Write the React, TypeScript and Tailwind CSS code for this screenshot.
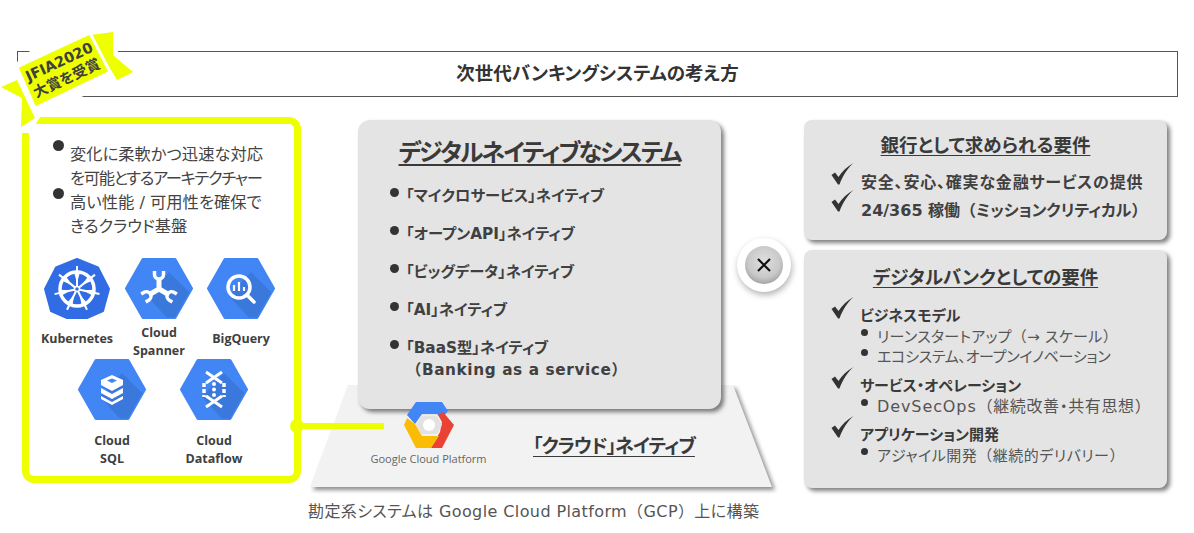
import React from 'react';

const jp = "font-['DejaVu_Sans','Noto_Sans_CJK_JP',sans-serif] [font-feature-settings:'palt']";

// full width brackets, the rest of the text stays proportional
function Fw({ text }: { text: string }) {
  return (
    <>
      {text.split(/([（）])/).map((part, i) =>
        part === '（' || part === '）' ? (
          <span key={i} className="[font-feature-settings:normal]">
            {part}
          </span>
        ) : (
          part
        ),
      )}
    </>
  );
}

function Hex({ id, children }: { id: string; children: React.ReactNode }) {
  return (
    <svg width="68" height="61" viewBox="0 0 68 61">
      <clipPath id={id}>
        <path d="M18 1.5H50L66.5 30.5L50 59.5H18L1.5 30.5Z" />
      </clipPath>
      <path d="M18 1.5H50L66.5 30.5L50 59.5H18L1.5 30.5Z" fill="#4285f4" stroke="#4285f4" strokeWidth="3" strokeLinejoin="round" />
      <path d="M22 38L44 14L70 40V64H46Z" fill="#3b78dc" clipPath={`url(#${id})`} />
      {children}
    </svg>
  );
}

function Kubernetes() {
  const spokes = [0, 51.4, 102.8, 154.3, 205.7, 257.1, 308.6];
  return (
    <svg width="68" height="61" viewBox="0 0 68 61">
      <path d="M34 1L55 9.5L66 31L60 53L44 60H24L8 53L2 31L13 9.5Z" fill="#326ce5" stroke="#326ce5" strokeWidth="2" strokeLinejoin="round" />
      <circle cx="34" cy="31" r="17" fill="none" stroke="#fff" strokeWidth="3.5" />
      <circle cx="34" cy="31" r="2.5" fill="none" stroke="#fff" strokeWidth="1.5" />
      {spokes.map((a) => (
        <g key={a} transform={`rotate(${a} 34 31)`}>
          <path d="M34 28V8" stroke="#fff" strokeWidth="2" />
          <path d="M34 25L31 14H37Z" fill="#fff" />
        </g>
      ))}
    </svg>
  );
}

function Spanner() {
  return (
    <Hex id="spanner">
      {[0, 120, 240].map((a) => (
        <g key={a} transform={`rotate(${a} 34 31)`} stroke="#fff" fill="none">
          <path d="M34 31V21" strokeWidth="5" />
          <path d="M29.5 13V16.5A4.5 4.5 0 0 0 38.5 16.5V13" strokeWidth="3.5" />
        </g>
      ))}
    </Hex>
  );
}

function BigQuery() {
  return (
    <Hex id="bigquery">
      <circle cx="32" cy="29" r="11" fill="none" stroke="#fff" strokeWidth="3.5" />
      <path d="M40 37L47 44" stroke="#fff" strokeWidth="3.5" strokeLinecap="round" />
      <path d="M27 27V33M32 24V33M37 29V33" stroke="#fff" strokeWidth="2.2" />
    </Hex>
  );
}

function CloudSql() {
  return (
    <Hex id="cloudsql">
      <path d="M34 16L45 21V26L34 32L23 26V21Z" fill="#fff" />
      <path d="M29 21.5L34 19.5L39 21.5L34 24Z" fill="#4285f4" />
      <path d="M23 29L34 35L45 29V34L34 40L23 34Z" fill="#fff" />
      <path d="M23 37L34 43L45 37V40L34 46L23 40Z" fill="#fff" />
    </Hex>
  );
}

function Dataflow() {
  return (
    <Hex id="dataflow">
      <g stroke="#fff" strokeWidth="3" fill="none">
        <path d="M26 13L42 24M42 13L26 24" />
        <path d="M26 37L42 48M42 37L26 48" />
        <path d="M24 24V38M44 24V38" strokeDasharray="4 2" strokeWidth="3.5" />
      </g>
      <circle cx="34" cy="25" r="2" fill="#fff" />
      <circle cx="34" cy="30.5" r="2" fill="#fff" />
      <circle cx="34" cy="36" r="2" fill="#fff" />
    </Hex>
  );
}

function Product({ icon, lines, labelClass }: { icon: React.ReactNode; lines: string[]; labelClass: string }) {
  return (
    <div className="flex flex-col items-center w-[82px] shrink-0">
      {icon}
      <div className={`h-[36px] flex flex-col justify-center items-center font-['Open_Sans',sans-serif] font-bold text-[12.5px] leading-[18px] text-[#404040] whitespace-nowrap ${labelClass} ${lines.length === 1 ? 'pb-[6px]' : ''}`}>
        {lines.map((l) => (
          <span key={l}>{l}</span>
        ))}
      </div>
    </div>
  );
}

function Check() {
  return (
    <svg width="23" height="22" viewBox="0 0 23 22" className="shrink-0">
      <path d="M0.5 12L4 9.5L7.5 14C11 8.5 16 3.5 22.5 0C16.5 5.5 12 12 8.5 21.5H7Z" fill="#333" />
    </svg>
  );
}

function Ribbon() {
  return (
    <div className="absolute z-30 left-0 top-0 w-[140px] h-[140px]">
      <svg width="140" height="140" viewBox="0 0 140 140" className="absolute inset-0">
        <path d="M0 82L17 62L36 46H112L140 72L72 101L62 114H42L30 133H16L0 95Z" fill="#fff" />
        <path d="M1 87L17 80L35 118L21 127L22 98Z" fill="#eeff00" />
        <path d="M113 32L90 35L117 80L133 72L113 55Z" fill="#eeff00" />
        <path d="M17 67L90 33L110 72L35 108Z" fill="#eeff00" stroke="#fff" strokeWidth="3" />
      </svg>
      <div className={`absolute left-[10px] top-[52px] w-[106px] -rotate-[25deg] text-center font-bold text-[14.5px] leading-[18px] text-[#404040] ${jp}`}>
        JFIA2020
        <br />
        大賞を受賞
      </div>
    </div>
  );
}

const nativeItems = ['「マイクロサービス」ネイティブ', '「オープンAPI」ネイティブ', '「ビッグデータ」ネイティブ', '「AI」ネイティブ'];

export default function App() {
  return (
    <div className={`relative w-[1194px] h-[533px] bg-white overflow-hidden pt-[51px] text-[#404040] ${jp}`}>
      {/* Title */}
      <div className="ml-[17px] w-[1161px] h-[46px] border border-[#555] flex items-center justify-center font-bold text-[18.5px] text-[#333]">
        次世代バンキングシステムの考え方
      </div>

      <div className="flex mt-[20px] ml-[22px]">
        {/* Left panel */}
        <div className="relative z-20 w-[279px] h-[366px] border-[7px] border-[#eeff00] rounded-[12px] shrink-0">
          <ul className="pt-[19px] pl-[24px] text-[16.3px] leading-[24px] text-[#444] whitespace-nowrap">
            <li className="relative pl-[17px]">
              <span className="absolute left-0 top-[-3px] w-[11px] h-[11px] rounded-full bg-[#333]" />
              変化に柔軟かつ迅速な対応
              <br />
              <span className="tracking-[-1.3px]">を可能とするアーキテクチャー</span>
            </li>
            <li className="relative pl-[17px]">
              <span className="absolute left-0 top-[-3px] w-[11px] h-[11px] rounded-full bg-[#333]" />
              高い性能 / 可用性を確保で
              <br />
              きるクラウド基盤
            </li>
          </ul>
          <div className="flex mt-[19px] pl-[7px]">
            <Product icon={<Kubernetes />} lines={['Kubernetes']} labelClass="mt-[5px]" />
            <Product icon={<Spanner />} lines={['Cloud', 'Spanner']} labelClass="mt-[5px]" />
            <Product icon={<BigQuery />} lines={['BigQuery']} labelClass="mt-[5px]" />
          </div>
          <div className="flex -mt-[1px] pl-[42px] gap-[20px]">
            <Product icon={<CloudSql />} lines={['Cloud', 'SQL']} labelClass="mt-[12px]" />
            <Product icon={<Dataflow />} lines={['Cloud', 'Dataflow']} labelClass="mt-[12px]" />
          </div>
          {/* Connector to the platform */}
          <div className="absolute left-[267px] top-[299px] w-[88px] h-[6px] bg-[#eeff00]" />
          <div className="absolute left-[261px] top-[295px] w-[14px] h-[14px] rounded-full bg-[#eeff00]" />
        </div>

        {/* Centre column */}
        <div className="w-[363px] ml-[57px] mt-[3px] shrink-0 flex flex-col relative">
          <div className="relative z-10 h-[289px] bg-[#e4e4e4] rounded-[12px] shadow-[3px_3px_4px_rgba(0,0,0,0.5)] pt-[15px]">
            <h2 className="text-center font-bold text-[24px] tracking-[-2px] leading-[36px] underline underline-offset-[3px] text-[#3a3a3a]">
              デジタルネイティブなシステム
            </h2>
            <ul className="mt-[6px] ml-[32px] font-bold text-[15.3px] text-[#404040]">
              {nativeItems.map((t) => (
                <li key={t} className="relative pl-[16px] h-[38px] leading-[38px]">
                  <span className="absolute left-0 top-[11px] w-[9px] h-[9px] rounded-full bg-[#333]" />
                  {t}
                </li>
              ))}
              <li className="relative pl-[16px] leading-[22px] pt-[8px]">
                <span className="absolute left-0 top-[11px] w-[9px] h-[9px] rounded-full bg-[#333]" />
                「BaaS型」ネイティブ
                <br />
                <span className="tracking-[0.6px]">
                  <Fw text="（Banking as a service）" />
                </span>
              </li>
            </ul>
          </div>

          {/* Platform */}
          <div className="relative -mt-[24px] -ml-[48px] w-[462px] h-[103px]">
            <svg width="470" height="112" viewBox="0 0 470 112" className="absolute left-0 top-0">
              <path d="M38 0H423L462 102H0Z" fill="#f2f2f2" style={{ filter: 'drop-shadow(3px 3px 2px rgba(0,0,0,0.45))' }} />
            </svg>
            <div className="relative flex pt-[17px] pl-[61px]">
              <div className="relative z-20 w-[115px] flex flex-col items-center">
                <svg width="50" height="46" viewBox="0 0 50 46">
                  <path d="M12 0H38L44 9L38 16L33 12H18L11 22L3 13Z" fill="#4285f4" />
                  <path d="M39 10L50 23L38 46H27L36 30L38 20L34 13Z" fill="#ea4335" />
                  <path d="M0 23L3 16L11 22L18 34H35L27 46H12Z" fill="#fbbc05" />
                  <path d="M17 14H33L38 23L33 32H17L12 23Z" fill="#e2e2e2" />
                  <circle cx="25" cy="23" r="6" fill="#fff" />
                </svg>
                <span className="mt-[3px] font-['Open_Sans',sans-serif] text-[11px] leading-[16px] text-[#666] whitespace-nowrap">
                  Google Cloud Platform
                </span>
              </div>
              <div className="ml-[47px] mt-[29px] font-bold text-[19px] tracking-[-1px] leading-[30px] underline underline-offset-[3px] text-[#3a3a3a] whitespace-nowrap">
                「クラウド」ネイティブ
              </div>
            </div>
          </div>

          <div className="-ml-[50px] mt-[13px] w-[470px] text-[16px] tracking-[0.4px] leading-[22px] text-[#555] whitespace-nowrap">
            <Fw text="勘定系システムは Google Cloud Platform（GCP）上に構築" />
          </div>
        </div>

        {/* Right column */}
        <div className="w-[363px] ml-[83px] mt-[3px] shrink-0 flex flex-col gap-[10px]">
          <div className="h-[120px] bg-[#e4e4e4] rounded-[8px] shadow-[3px_3px_4px_rgba(0,0,0,0.5)] pt-[12px] pl-[27px]">
            <h3 className="text-center pr-[27px] font-bold text-[18.5px] leading-[28px] underline underline-offset-[3px] text-[#3a3a3a]">
              銀行として求められる要件
            </h3>
            <div className="mt-[3px] font-bold text-[16px] leading-[22px] whitespace-nowrap">
              <div className="flex gap-[7px] h-[27px]">
                <Check />
                <span className="mt-[9px] tracking-[0.8px]">安全、安心、確実な金融サービスの提供</span>
              </div>
              <div className="flex gap-[7px] h-[27px]">
                <Check />
                <span className="mt-[10px]">
                  <Fw text="24/365 稼働（ミッションクリティカル）" />
                </span>
              </div>
            </div>
          </div>

          <div className="h-[238px] bg-[#e4e4e4] rounded-[8px] shadow-[3px_3px_4px_rgba(0,0,0,0.5)] pt-[14px] pl-[27px]">
            <h3 className="text-center pr-[27px] font-bold text-[18.5px] leading-[28px] underline underline-offset-[3px] text-[#3a3a3a]">
              デジタルバンクとしての要件
            </h3>
            <Req title="ビジネスモデル" className="mt-[5px]">
              <SubItem><span className="tracking-[0.3px]"><Fw text="リーンスタートアップ（→ スケール）" /></span></SubItem>
              <SubItem><span className="tracking-[-0.3px]">エコシステム、オープンイノベーション</span></SubItem>
            </Req>
            <Req title="サービス・オペレーション" className="mt-0">
              <SubItem>
                <span className="text-[16px] tracking-[0.9px]">DevSecOps</span>
                <span className="text-[16px] tracking-[0.6px]"><Fw text="（継続改善・共有思想）" /></span>
              </SubItem>
            </Req>
            <Req title="アプリケーション開発" className="-mt-[1px]">
              <SubItem><span className="tracking-[0.5px]"><Fw text="アジャイル開発（継続的デリバリー）" /></span></SubItem>
            </Req>
          </div>
        </div>
      </div>

      {/* × badge */}
      <div className="absolute left-[737px] top-[238px] w-[54px] h-[54px] rounded-full bg-white shadow-[1px_3px_6px_rgba(0,0,0,0.3)] flex items-center justify-center">
        <div className="w-[38px] h-[38px] rounded-full bg-[radial-gradient(circle_at_50%_40%,#e0e0e0_0%,#c8c8c8_55%,#7f7f7f_100%)] flex items-center justify-center">
          <svg width="16" height="16" viewBox="0 0 16 16">
            <path d="M2 2L14 14M14 2L2 14" stroke="#111" strokeWidth="2.2" />
          </svg>
        </div>
      </div>

      <Ribbon />
    </div>
  );
}

function SubItem({ children }: { children: React.ReactNode }) {
  return (
    <li className="relative pl-[16px]">
      <span className="absolute left-0 top-[2px] w-[7px] h-[7px] rounded-full bg-[#333]" />
      {children}
    </li>
  );
}

function Req({ title, children, className }: { title: string; children: React.ReactNode; className: string }) {
  return (
    <div className={className}>
      <div className="flex gap-[6px]">
        <Check />
        <span className="mt-[8px] font-bold text-[15px] leading-[22px] text-[#3a3a3a]">{title}</span>
      </div>
      <ul className="ml-[30px] text-[15px] leading-[20px] text-[#555] whitespace-nowrap">{children}</ul>
    </div>
  );
}
